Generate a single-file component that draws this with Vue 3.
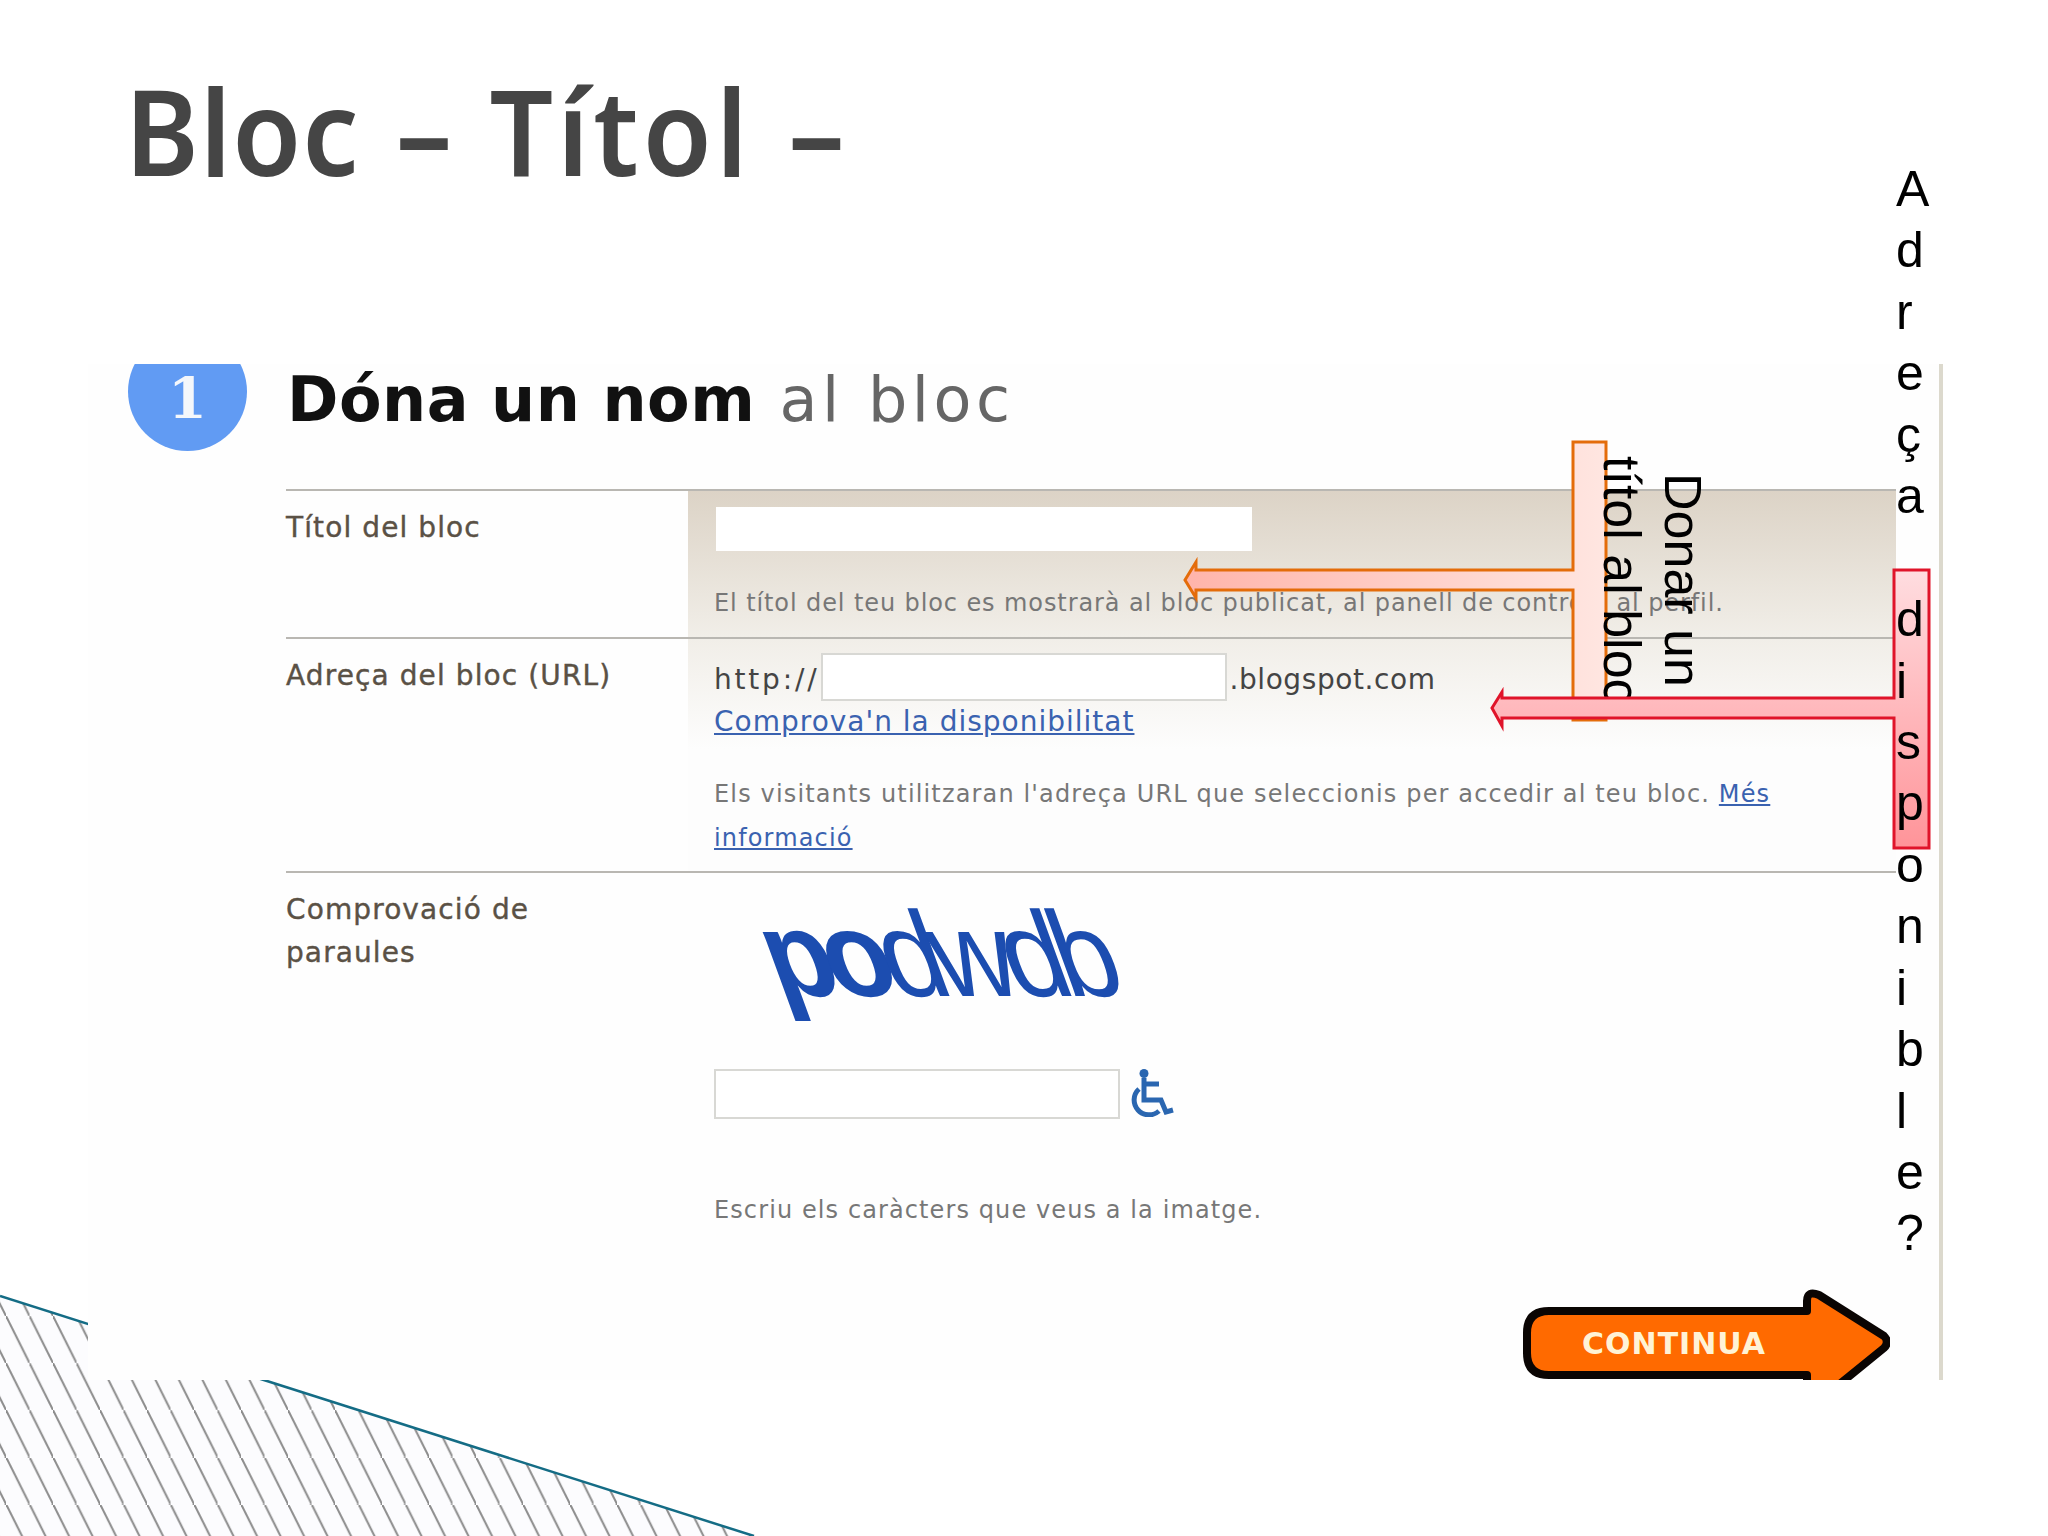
<script setup>
const lletres = 'Adreça disponible?'.split('');
</script>

<template>
  <div class="slide">
    <svg class="hatch" width="800" height="260" viewBox="0 1276 800 260">
      <defs>
        <pattern id="ratlles" width="23.5" height="47" patternUnits="userSpaceOnUse" patternTransform="translate(6 0)">
          <line x1="-2" y1="-4" x2="25.5" y2="51" stroke="#8c8c8c" stroke-width="2" />
        </pattern>
      </defs>
      <polygon points="0,1296 754,1536 0,1536" fill="#fcfcfe" />
      <polygon points="0,1296 754,1536 0,1536" fill="url(#ratlles)" />
      <line x1="0" y1="1296" x2="754" y2="1536" stroke="#146c85" stroke-width="2.5" />
    </svg>

    <h1 class="title">Bloc – <span class="title-word">Títol</span> –</h1>

    <section class="shot">
      <div class="head">
        <div class="step">1</div>
        <h2><b>Dóna un nom</b> al bloc</h2>
      </div>

      <div class="form">
        <div class="label">Títol del bloc</div>
        <div class="field first">
          <div class="input title-input"></div>
          <p class="hint hint-title">El títol del teu bloc es mostrarà al bloc publicat, al panell de control i al perfil.</p>
        </div>

        <div class="label">Adreça del bloc (URL)</div>
        <div class="field second">
          <div class="url">
            <span class="scheme">http://</span>
            <div class="input url-input"></div>
            <span class="domain">.blogspot.com</span>
          </div>
          <a class="check">Comprova'n la disponibilitat</a>
          <p class="hint hint-url">Els visitants utilitzaran l'adreça URL que seleccionis per accedir al teu bloc. <a>Més informació</a></p>
        </div>

        <div class="label">Comprovació de<br />paraules</div>
        <div class="field third">
          <div class="captcha"><b>po</b>dwdb</div>
          <div class="word">
            <div class="input word-input"></div>
            <svg width="43" height="48" viewBox="0 0 43 48" fill="none" stroke="#2a66b0" stroke-width="5">
              <circle cx="13" cy="4.5" r="4.5" fill="#2a66b0" stroke="none" />
              <path d="M13 9 V31 H30 L35 43 L42 41" />
              <path d="M13 15 H28" />
              <path d="M8 20 A14 14 0 1 0 28 42" />
            </svg>
          </div>
          <p class="hint hint-word">Escriu els caràcters que veus a la imatge.</p>
        </div>
      </div>

      <div class="actions">
        <svg class="continue" width="367" height="91" viewBox="0 0 367 91">
          <path d="M26 22 H284 V12 Q284 1 296 6 L361 47 Q367 53 361 59 L313 98 H284 V86 H26 Q4 86 4 64 V44 Q4 22 26 22 Z" fill="#ff6a00" stroke="#0a0503" stroke-width="8" stroke-linejoin="round" />
          <text x="59" y="65" class="continue-text">CONTINUA</text>
        </svg>
      </div>
    </section>

    <svg class="callouts" width="2048" height="1536" viewBox="0 0 2048 1536">
      <defs>
        <linearGradient id="taronja" x1="0" y1="0" x2="1" y2="0">
          <stop offset="0" stop-color="#ffb4aa" />
          <stop offset="1" stop-color="#ffe6e1" />
        </linearGradient>
        <linearGradient id="vermell" x1="0" y1="0" x2="0" y2="1">
          <stop offset="0" stop-color="#ffdde0" />
          <stop offset="1" stop-color="#ff9499" />
        </linearGradient>
      </defs>
      <path d="M1573 442 H1606 V720 H1573 V590 H1196 V598 L1185 580 L1196 562 V570 H1573 Z" fill="url(#taronja)" stroke="#e46c0a" stroke-width="3" />
    </svg>

    <div class="note-title">Donar un<br />títol al bloc</div>

    <svg class="callouts" width="2048" height="1536" viewBox="0 0 2048 1536">
      <path d="M1894 570 H1929 V848 H1894 V718 H1502 V726 L1492 708 L1502 692 V698 H1894 Z" fill="url(#vermell)" stroke="#e0142a" stroke-width="3" />
    </svg>

    <div class="note-url">
      <div v-for="(lletra, i) in lletres" :key="i" class="lletra">{{ lletra }}</div>
    </div>
  </div>
</template>

<style>
body {
  background: #fff;
}
</style>

<style scoped>
.slide {
  position: relative;
  width: 2048px;
  height: 1536px;
  overflow: hidden;
  background: #fff;
  font-family: "DejaVu Sans", sans-serif;
}

.hatch {
  position: absolute;
  left: 0;
  top: 1276px;
}

.title {
  height: 364px;
  margin: 0;
  padding: 60px 0 0 125px;
  box-sizing: border-box;
  font-family: "Noto Sans", sans-serif;
  font-size: 119px;
  font-weight: 600;
  line-height: 140px;
  word-spacing: 7px;
  letter-spacing: 1px;
  color: #454545;
  transform: scaleX(0.94);
  transform-origin: 125px 0;
}

.title-word {
  letter-spacing: 4.5px;
}

.shot {
  position: relative;
  width: 1851px;
  height: 1016px;
  margin-left: 88px;
  border-right: 4px solid #dcd9cd;
  background: #fefefe;
  overflow: hidden;
}

.head {
  display: flex;
  height: 125px;
  padding-left: 40px;
  gap: 40px;
}

.step {
  flex: none;
  width: 119px;
  height: 119px;
  margin-top: -32px;
  border-radius: 50%;
  background: #619bf3;
  color: #f4f7fb;
  font-family: "DejaVu Serif", serif;
  font-size: 56px;
  font-weight: 700;
  line-height: 133px;
  text-align: center;
}

.head h2 {
  margin: 0;
  padding-top: 8px;
  font-size: 62px;
  font-weight: 400;
  line-height: 56px;
  letter-spacing: 4.5px;
  color: #666;
  white-space: nowrap;
}

.head b {
  color: #111;
  letter-spacing: 0.5px;
}

.form {
  display: grid;
  grid-template-columns: 402px 1208px;
  grid-template-rows: 148px 234px 1fr;
  width: 1610px;
  height: 500px;
  margin-left: 198px;
}

.label {
  padding-top: 15px;
  border-top: 2px solid #b9b7b2;
  font-size: 28px;
  line-height: 43px;
  letter-spacing: 1.1px;
  color: #5a5145;
  -webkit-text-stroke: 0.4px #5a5145;
}

.field {
  box-sizing: border-box;
  border-top: 2px solid #b9b7b2;
  padding-left: 26px;
}

.first {
  background: linear-gradient(#dcd3c6, #f1eee8);
}

.second {
  background: linear-gradient(#f1eee8, #fdfdfd 110px);
}

.input {
  box-sizing: border-box;
  background: #fff;
}

.title-input {
  width: 536px;
  height: 44px;
  margin-top: 16px;
  margin-left: 2px;
}

.url-input,
.word-input {
  border: 2px solid #d8d8d4;
}

.hint {
  margin: 0;
  font-size: 24px;
  line-height: 44px;
  color: #777;
}

.hint a {
  color: #3a62b0;
  text-decoration: underline;
}

.hint-title {
  margin-top: 30px;
  letter-spacing: 0.9px;
  white-space: nowrap;
}

.url {
  display: flex;
  align-items: center;
  margin-top: 14px;
  font-size: 28px;
  color: #444;
}

.scheme {
  padding-top: 5px;
  letter-spacing: 2.8px;
}

.domain {
  padding-top: 5px;
  letter-spacing: 0.6px;
}

.url-input {
  width: 406px;
  height: 48px;
  margin-left: 2px;
  margin-right: 2px;
}

.check {
  display: block;
  margin-top: 1px;
  font-size: 28px;
  line-height: 40px;
  letter-spacing: 1px;
  color: #3a62b0;
  text-decoration: underline;
}

.hint-url {
  margin-top: 30px;
  letter-spacing: 1.15px;
}

.captcha {
  width: 356px;
  height: 170px;
  margin-left: 63px;
  font-family: "Liberation Sans", sans-serif;
  font-size: 112px;
  line-height: 170px;
  letter-spacing: -10.5px;
  color: #1c4db0;
  transform: skewX(20deg) scaleY(1.08);
  transform-origin: 50% 70%;
}

.word {
  display: flex;
  gap: 11px;
  margin-top: 26px;
}

.word-input {
  width: 406px;
  height: 50px;
}

.hint-word {
  margin-top: 69px;
  letter-spacing: 1.1px;
}

.actions {
  display: flex;
  justify-content: flex-end;
  position: absolute;
  right: 49px;
  bottom: 0;
}

.continue {
  display: block;
}

.continue-text {
  font-family: "DejaVu Sans", sans-serif;
  font-size: 30px;
  font-weight: 700;
  letter-spacing: 1px;
  fill: #fff3d6;
}

.callouts {
  position: absolute;
  left: 0;
  top: 0;
  pointer-events: none;
}

.note-title {
  position: absolute;
  left: 1593px;
  top: 440px;
  width: 120px;
  height: 280px;
  writing-mode: vertical-rl;
  font-family: "Liberation Sans", sans-serif;
  font-size: 52px;
  line-height: 61px;
  text-align: center;
  color: #000;
  white-space: nowrap;
}

.note-url {
  position: absolute;
  left: 1896px;
  top: 159px;
  font-family: "Liberation Sans", sans-serif;
  font-size: 50px;
  color: #000;
}

.lletra {
  height: 61.45px;
  line-height: 61.45px;
}
</style>
